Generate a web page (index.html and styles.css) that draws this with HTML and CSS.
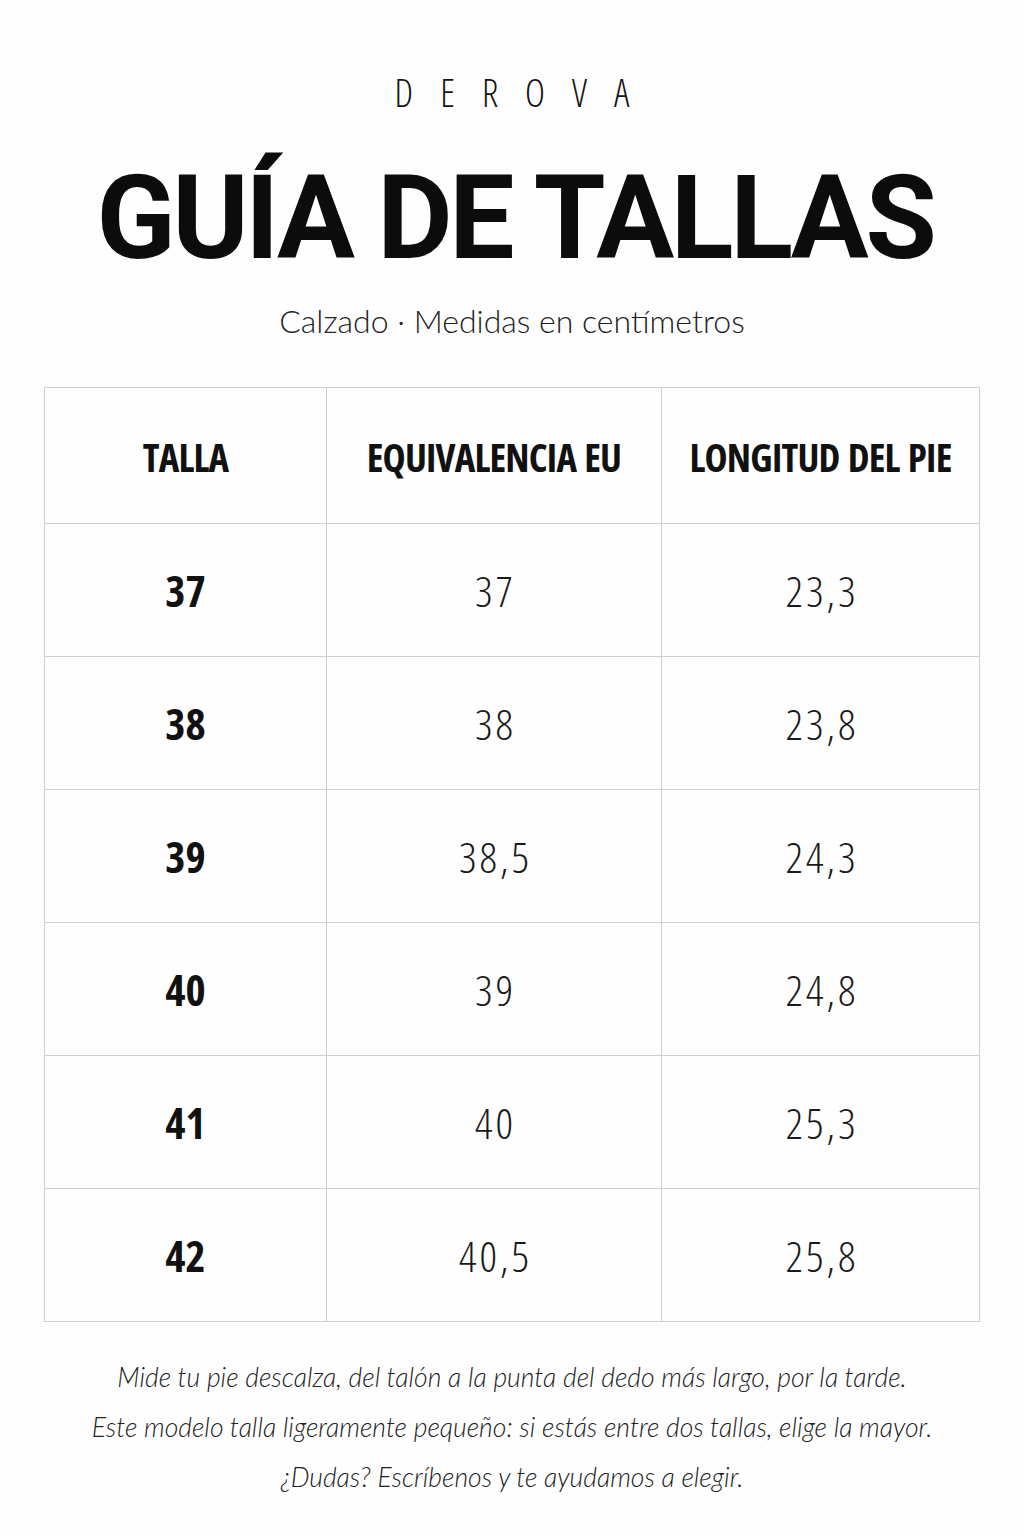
FILE: index.html
```html
<!DOCTYPE html>
<html lang="es">
<head>
<meta charset="utf-8">
<title>Guía de tallas · DEROVA</title>
<link rel="stylesheet" href="styles.css">
</head>
<body>
<main class="page">
  <header class="head">
    <div class="brand">DEROVA</div>
    <h1 class="title">GUÍA DE TALLAS</h1>
    <p class="subtitle">Calzado · Medidas en centímetros</p>
  </header>

  <div class="table">
    <div class="cell th">TALLA</div>
    <div class="cell th">EQUIVALENCIA EU</div>
    <div class="cell th last">LONGITUD DEL PIE</div>

    <div class="cell size">37</div>
    <div class="cell val">37</div>
    <div class="cell val last">23,3</div>

    <div class="cell size">38</div>
    <div class="cell val">38</div>
    <div class="cell val last">23,8</div>

    <div class="cell size">39</div>
    <div class="cell val">38,5</div>
    <div class="cell val last">24,3</div>

    <div class="cell size">40</div>
    <div class="cell val">39</div>
    <div class="cell val last">24,8</div>

    <div class="cell size">41</div>
    <div class="cell val">40</div>
    <div class="cell val last">25,3</div>

    <div class="cell size bottom">42</div>
    <div class="cell val bottom">40,5</div>
    <div class="cell val last bottom">25,8</div>
  </div>

  <footer class="notes">
    <p>Mide tu pie descalza, del talón a la punta del dedo más largo, por la tarde.</p>
    <p>Este modelo talla ligeramente pequeño: si estás entre dos tallas, elige la mayor.</p>
    <p>¿Dudas? Escríbenos y te ayudamos a elegir.</p>
  </footer>
</main>
</body>
</html>
```

FILE: styles.css
```css
* { box-sizing: border-box; }

html, body {
  margin: 0;
  padding: 0;
  background: #fefefe;
  color: #111;
}

.page {
  width: 1024px;
  min-height: 1536px;
  padding-top: 70px;
  display: flex;
  flex-direction: column;
  align-items: center;
}

.head {
  display: flex;
  flex-direction: column;
  align-items: center;
}

.brand {
  font-family: "Open Sans", sans-serif;
  font-stretch: 75%;
  font-weight: 350;
  font-size: 38px;
  line-height: 44px;
  letter-spacing: 27px;
  padding-left: 27px;
  color: #151515;
}

.title {
  margin: 46px 0 0;
  padding-left: 6px;
  font-family: Roboto, "Liberation Sans", sans-serif;
  font-weight: 700;
  font-size: 116px;
  line-height: 116px;
  letter-spacing: -3.3px;
  color: #0c0c0c;
}

.subtitle {
  margin: 26px 0 0;
  font-family: Lato, "Open Sans", sans-serif;
  font-weight: 300;
  font-size: 32px;
  line-height: 38px;
  color: #222;
}

.table {
  margin-top: 47px;
  display: grid;
  grid-template-columns: 282px 335px 318px;
  grid-template-rows: 136px repeat(6, 133px);
  border-top: 1.5px solid #cfcfcf;
  border-left: 1.5px solid #cfcfcf;
}

.cell {
  display: flex;
  align-items: center;
  justify-content: center;
  border-right: 1.5px solid #cfcfcf;
  border-bottom: 1.5px solid #cfcfcf;
  font-family: "Open Sans", sans-serif;
  font-stretch: 75%;
  color: #111;
}

.th {
  font-weight: 700;
  font-size: 39px;
  letter-spacing: -0.8px;
  word-spacing: 2px;
  padding-top: 2px;
}

.size {
  font-weight: 700;
  font-size: 43px;
}

.val {
  font-weight: 300;
  font-size: 43px;
  letter-spacing: 3px;
  padding-left: 3px;
  color: #1a1a1a;
}

.notes {
  margin-top: 30px;
  display: flex;
  flex-direction: column;
  align-items: center;
}

.notes p {
  margin: 0;
  font-family: Lato, "Open Sans", sans-serif;
  font-style: italic;
  font-weight: 300;
  font-size: 26.5px;
  line-height: 50px;
  color: #222;
}
```
